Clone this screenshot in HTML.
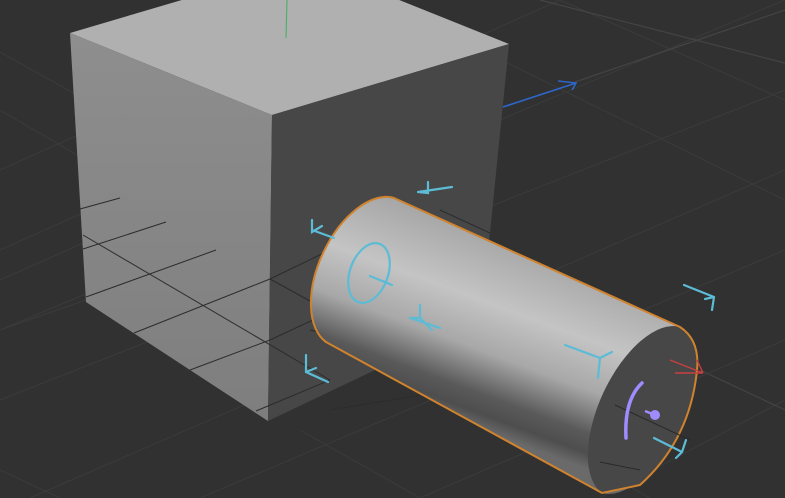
<!DOCTYPE html>
<html><head><meta charset="utf-8"><style>html,body{margin:0;padding:0;background:#313131;overflow:hidden}svg{display:block}</style></head>
<body>
<svg width="785" height="498" viewBox="0 0 785 498" xmlns="http://www.w3.org/2000/svg">
<defs>
<linearGradient id="lf" x1="0" y1="0" x2="0" y2="1"><stop offset="0" stop-color="#8e8e8e"/><stop offset="1" stop-color="#7e7e7e"/></linearGradient>
<linearGradient id="cyl" gradientUnits="userSpaceOnUse" x1="520" y1="245" x2="455" y2="420">
<stop offset="0" stop-color="#a6a6a6"/><stop offset="0.35" stop-color="#c4c4c4"/><stop offset="0.6" stop-color="#a8a8a8"/><stop offset="0.82" stop-color="#5a5a5a"/><stop offset="0.92" stop-color="#4e4e4e"/><stop offset="1" stop-color="#6a6a6a"/></linearGradient>
</defs>
<rect width="785" height="498" fill="#313131"/>
<g stroke="#3b3b3b" stroke-width="1" fill="none">
<path d="M0 52 L140 130 M0 110 L120 180 M0 330 L785 0 M0 400 L785 90 M0 250 L560 0 M30 498 L785 170 M200 498 L785 250 M420 498 L785 340 M0 170 L380 0"/>
<path d="M380 0 L785 200 M560 0 L785 100 M600 498 L785 400 M470 400 L650 498 M0 470 L60 498 M300 430 L420 498 M0 280 L90 240 M0 330 L86 300"/>
</g>
<g stroke="#444" stroke-width="1.2" fill="none">
<path d="M540 0 L785 63 M575 82 L785 10 M700 370 L785 410"/>
</g>
<!-- cube -->
<polygon points="70,33 307,-37 509,44 272,115" fill="#b0b0b0"/>
<polygon points="70,33 272,115 268,421 86,302" fill="url(#lf)"/>
<polygon points="272,115 509,44 490,233 480,320 268,421" fill="#474747"/>
<!-- grid lines over cube -->
<g stroke="#2c2c2c" stroke-width="1" fill="none">
<path d="M80 209 L120 198 M83 249 L166 222 M86 297 L216 250 M134 333 L270 279 L330 250 M190 370 L270 340 L330 312 M256 411 L330 380 M83 235 L330 380 M440 210 L490 233 M310 330 L560 390 M470 390 L620 410 M330 410 L512 380 M270 279 L330 312"/>
</g>
<line x1="287" y1="0" x2="286" y2="38" stroke="#3fb060" stroke-width="1"/>
<g stroke="#2d66c8" stroke-width="1.6" fill="none"><path d="M503 107 L576 83 M558 81 L576 83 L572 90"/></g>
<!-- cylinder -->
<path d="M394 198 L680 327 A45 92 25 0 1 602 493 L326 342 A45 80 25 0 1 394 198 Z" fill="url(#cyl)"/>
<path d="M680 327 Q700 340 697 370 Q690 440 640 485 L602 493 A45 92 25 0 1 680 327 Z" fill="#474747"/>
<path d="M394 198 L680 327 Q700 340 697 370 Q690 440 640 485 L602 493 L326 342 A45 80 25 0 1 394 198 Z" fill="none" stroke="#d0832f" stroke-width="2"/>
<g stroke="#2a2a2a" stroke-width="1" fill="none"><path d="M615 405 L690 440 M600 462 L640 470"/></g>
<!-- gizmos -->
<g stroke="#5cbcd6" stroke-width="2.2" fill="none" stroke-linecap="round">
<ellipse cx="369" cy="273" rx="19" ry="31" transform="rotate(20 369 273)"/>
<path d="M370 276 L392 285"/>
<path d="M418 192 L452 187 M428 182 L428 193 L418 192" />
<path d="M312 230 L334 238 M312 220 L312 232 L322 226"/>
<path d="M410 318 L440 328 M420 305 L420 318 L410 318 M420 318 L432 330"/>
<path d="M306 355 L306 372 L328 382 M306 372 L316 368"/>
<path d="M565 345 L600 358 M600 358 L612 352 M600 358 L598 378"/>
<path d="M684 285 L714 297 M714 297 L712 310 M714 297 L705 299"/>
<path d="M654 438 L682 452 M682 452 L686 440 M682 452 L676 458"/>
</g>
<g stroke="#c84040" stroke-width="1.4" fill="none"><path d="M670 360 L703 373 L675 373 M703 373 L697 360"/></g>
<path d="M642 383 Q624 400 626 438" stroke="#a08cff" stroke-width="3.5" fill="none" stroke-linecap="round"/>
<circle cx="655" cy="415" r="5" fill="#a08cff"/>
<line x1="645" y1="411" x2="655" y2="415" stroke="#a08cff" stroke-width="2.5"/>
</svg>
</body></html>
